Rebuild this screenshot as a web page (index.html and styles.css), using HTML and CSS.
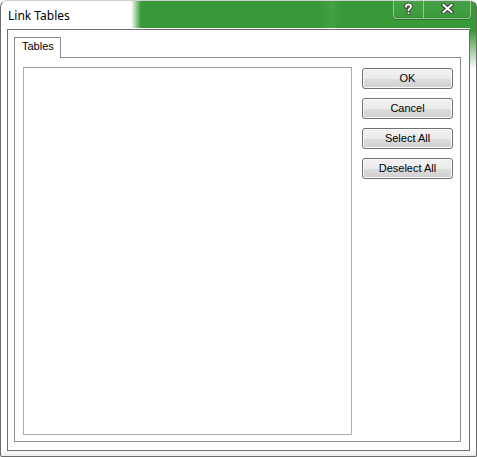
FILE: index.html
```html
<!DOCTYPE html>
<html>
<head>
<meta charset="utf-8">
<link rel="stylesheet" href="styles.css">
</head>
<body>
<div class="window">
  <div class="titlebar">
    <span class="title">Link Tables</span>
    <div class="caption">
      <div class="cap cap-help">
        <svg width="9" height="12" viewBox="0 0 9 12">
          <path d="M2 3.6 C2 0.8 7 0.8 7 3.6 C7 5.6 4.5 5.4 4.5 7.4" fill="none" stroke="#3a3a3a" stroke-width="3.6" stroke-linecap="square"/>
          <rect x="2.6" y="8.6" width="3.8" height="3.2" fill="#3a3a3a"/>
          <path d="M2 3.6 C2 0.8 7 0.8 7 3.6 C7 5.6 4.5 5.4 4.5 7.4" fill="none" stroke="#fff" stroke-width="1.8" stroke-linecap="square"/>
          <rect x="3.5" y="9.4" width="2" height="1.7" fill="#fff"/>
        </svg>
      </div>
      <div class="cap cap-close">
        <svg width="13" height="11" viewBox="0 0 13 11">
          <path d="M2.5 2 L10.5 9 M10.5 2 L2.5 9" fill="none" stroke="#3a3a3a" stroke-width="4" stroke-linecap="square"/>
          <path d="M2.5 2 L10.5 9 M10.5 2 L2.5 9" fill="none" stroke="#fff" stroke-width="2" stroke-linecap="square"/>
        </svg>
      </div>
    </div>
  </div>
  <div class="client">
    <div class="tabs">
      <div class="tab">Tables</div>
      <div class="tab-rest"></div>
    </div>
    <div class="panel">
      <div class="listbox"></div>
      <div class="buttons">
        <button class="btn">OK</button>
        <button class="btn">Cancel</button>
        <button class="btn">Select All</button>
        <button class="btn">Deselect All</button>
      </div>
    </div>
  </div>
</div>
</body>
</html>
```
FILE: styles.css
```css
html, body {
  margin: 0;
  padding: 0;
  background: #ffffff;
}

.window {
  box-sizing: border-box;
  width: 477px;
  height: 457px;
  border: 1px solid #6a6a6a;
  border-top-color: #cfcfcf;
  border-radius: 7px 7px 2px 2px;
  padding: 0 6px 5px 6px;
  display: flex;
  flex-direction: column;
  background:
    linear-gradient(to right, #ffffff 130px, #389938 140px, #389938 320px, #45a045 330px, #389938 340px) 0 0 / 100% 27px no-repeat,
    linear-gradient(to bottom, #389938 30px, rgba(56,153,56,0) 68px) 100% 0 / 6px 70px no-repeat,
    linear-gradient(to bottom, #ffffff 0, #ffffff 449px, #ececec 455px);
  font-family: "Liberation Sans", Arial, sans-serif;
}

.titlebar {
  height: 28px;
  display: flex;
  justify-content: space-between;
  align-items: flex-start;
  margin: 0 -6px 0 -6px;
  padding: 0 5px 0 7px;
}

.title {
  padding-top: 7px;
  font-family: "Noto Sans", "Liberation Sans", sans-serif;
  font-size: 12px;
  line-height: 15px;
  color: #000000;
}

.caption {
  display: flex;
  margin-top: -1px;
}

.cap {
  box-sizing: border-box;
  height: 19px;
  display: flex;
  align-items: center;
  justify-content: center;
  border: 1px solid rgba(255, 255, 255, 0.45);
  border-top: none;
  box-shadow: 0 1px 0 rgba(0, 0, 0, 0.25), inset 0 -1px 0 rgba(0, 0, 0, 0.15);
  background: linear-gradient(to bottom, rgba(255,255,255,0.08), rgba(255,255,255,0.02));
}

.cap-help {
  width: 31px;
  border-radius: 0 0 0 4px;
  padding-bottom: 1px;
}

.cap-close {
  width: 47px;
  border-left: none;
  border-radius: 0 0 4px 0;
  padding-bottom: 1px;
}

.client {
  flex: 1;
  border: 1px solid #6f6f6f;
  padding: 7px 8px 8px 6px;
  display: flex;
  flex-direction: column;
  background: #ffffff;
}

.tabs {
  display: flex;
  height: 21px;
}

.tab {
  box-sizing: border-box;
  width: 47px;
  height: 21px;
  border: 1px solid #898c95;
  border-bottom: none;
  padding: 2px 0 0 7px;
  font-size: 11px;
  line-height: 13px;
  color: #000000;
  background: #ffffff;
}

.tab-rest {
  flex: 1;
  border-bottom: 1px solid #898c95;
}

.panel {
  flex: 1;
  display: flex;
  border: 1px solid #898c95;
  border-top: none;
  padding: 9px 7px 6px 8px;
}

.listbox {
  box-sizing: border-box;
  width: 329px;
  border: 1px solid #abadb3;
  border-top-color: #9a9ca2;
  background: #ffffff;
}

.buttons {
  margin-left: 10px;
  padding-top: 1px;
  display: flex;
  flex-direction: column;
  gap: 9px;
}

.btn {
  box-sizing: border-box;
  width: 91px;
  height: 21px;
  margin: 0;
  padding: 0;
  border: 1px solid #707070;
  border-radius: 3px;
  box-shadow: inset 0 0 0 1px #fbfbfb;
  background: linear-gradient(to bottom, #f2f2f2 0%, #ebebeb 50%, #dddddd 51%, #cfcfcf 100%);
  font-family: "Liberation Sans", Arial, sans-serif;
  font-size: 11px;
  line-height: 13px;
  color: #000000;
  text-align: center;
}
```
